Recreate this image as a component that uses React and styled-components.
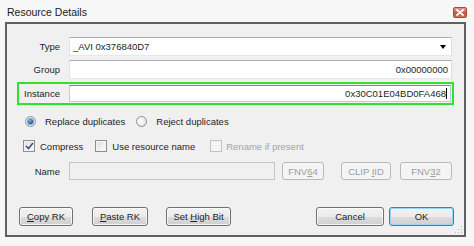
import React from "react";
import styled, { createGlobalStyle } from "styled-components";

const GlobalStyle = createGlobalStyle`
  html, body {
    margin: 0;
    padding: 0;
    background: #f7f7f7;
  }
  #root {
    width: 474px;
    height: 246px;
    overflow: hidden;
  }
  * {
    box-sizing: border-box;
  }
`;

const App = () => {
  return (
    <>
      <GlobalStyle />
      <Window>
        <TitleBar>
          <Title>Resource Details</Title>
          <CloseButton>
            <svg width="8" height="7" viewBox="0 0 8 7">
              <path d="M1 1 L7 6 M7 1 L1 6" stroke="#fff" strokeWidth="1.8" strokeLinecap="round" />
            </svg>
          </CloseButton>
        </TitleBar>

        <Frame>
          <FieldRow $top={13}>
            <Label>Type</Label>
            <Combo>
              <span>_AVI 0x376840D7</span>
              <DropArrow />
            </Combo>
          </FieldRow>

          <FieldRow $top={4}>
            <Label>Group</Label>
            <TextBox $right>0x00000000</TextBox>
          </FieldRow>

          <Highlight>
            <HighlightLabel>Instance</HighlightLabel>
            <TextBox $right $focused $width={382} $height={17}>
              0x30C01E04BD0FA468
              <Caret />
            </TextBox>
          </Highlight>

          <OptionRow $top={9}>
            <Option $ml={18} $gap={9}>
              <Radio $checked />
              Replace duplicates
            </Option>
            <Option $ml={11} $gap={9}>
              <Radio />
              Reject duplicates
            </Option>
          </OptionRow>

          <OptionRow $top={11}>
            <Option $ml={16} $gap={5}>
              <CheckBox>
                <svg width="9" height="8" viewBox="0 0 9 8">
                  <path d="M1 4 L3.5 6.5 L8 1" stroke="#3b4f8a" strokeWidth="1.6" fill="none" />
                </svg>
              </CheckBox>
              Compress
            </Option>
            <Option $ml={12} $gap={5}>
              <CheckBox />
              Use resource name
            </Option>
            <Option $ml={15} $gap={4} $disabled>
              <CheckBox $disabled />
              Rename if present
            </Option>
          </OptionRow>

          <FieldRow $top={9}>
            <Label>Name</Label>
            <TextBox $disabled $width={206} $height={18} />
            <PushButton disabled $ml={7} $width={42} $height={18}>
              FNV<u>6</u>4
            </PushButton>
            <PushButton disabled $ml={17} $width={50} $height={18}>
              CLIP <u>I</u>ID
            </PushButton>
            <PushButton disabled $ml={9} $width={52} $height={18}>
              FNV<u>3</u>2
            </PushButton>
          </FieldRow>

          <ButtonBar>
            <ButtonGroup>
              <PushButton $width={54}>
                <u>C</u>opy RK
              </PushButton>
              <PushButton $ml={19} $width={56}>
                <u>P</u>aste RK
              </PushButton>
              <PushButton $ml={18} $width={65}>
                Set <u>H</u>igh Bit
              </PushButton>
            </ButtonGroup>
            <ButtonGroup>
              <PushButton $width={68}>Cancel</PushButton>
              <PushButton $default $ml={5} $width={65}>
                OK
              </PushButton>
            </ButtonGroup>
          </ButtonBar>

          <Grip>
            <svg width="8" height="8" viewBox="0 0 8 8">
              <rect x="6" y="0" width="1" height="1" fill="#b5b5b5" />
              <rect x="3" y="3" width="1" height="1" fill="#b5b5b5" />
              <rect x="6" y="3" width="1" height="1" fill="#b5b5b5" />
              <rect x="0" y="6" width="1" height="1" fill="#b5b5b5" />
              <rect x="3" y="6" width="1" height="1" fill="#b5b5b5" />
              <rect x="6" y="6" width="1" height="1" fill="#b5b5b5" />
            </svg>
          </Grip>
        </Frame>
      </Window>
    </>
  );
};

export default App;

/* ---------- styled-components ---------- */

const Window = styled.div`
  width: 474px;
  height: 246px;
  font-family: "Liberation Sans", Arial, sans-serif;
  font-size: 9.5px;
  color: #1e1e1e;
`;

const TitleBar = styled.div`
  height: 22px;
  display: flex;
  align-items: center;
  justify-content: space-between;
  padding: 2px 7px 0 7px;
`;

const Title = styled.div`
  font-size: 10.5px;
  color: #1a1a1a;
  text-shadow: 0 0 8px #ffffff;
`;

const CloseButton = styled.div`
  width: 14px;
  height: 11px;
  border-radius: 2px;
  border: 1px solid #a9483d;
  background: linear-gradient(#e29a8e, #d0604f 50%, #c24330 51%, #d1735c);
  display: flex;
  align-items: center;
  justify-content: center;
`;

const Frame = styled.div`
  position: relative;
  margin-left: 5px;
  width: 461px;
  height: 215px;
  border: 2px solid #606060;
  background: #f0f0f0;
  display: flex;
  flex-direction: column;
`;

const FieldRow = styled.div`
  display: flex;
  align-items: center;
  margin-top: ${({ $top }) => $top || 0}px;
`;

const Label = styled.div`
  width: 53px;
  margin-right: 9px;
  text-align: right;
`;

const TextBox = styled.div`
  position: relative;
  width: ${({ $width }) => $width || 383}px;
  height: ${({ $height }) => $height || 19}px;
  padding: 0 3px;
  display: flex;
  align-items: center;
  justify-content: ${({ $right }) => ($right ? "flex-end" : "flex-start")};
  background: ${({ $disabled }) => ($disabled ? "#f0f0f0" : "#ffffff")};
  border: 1px solid;
  border-color: ${({ $disabled, $focused }) =>
    $disabled
      ? "#c6c6c6"
      : $focused
      ? "#5a8fc8 #b5cfe7 #b5cfe7 #b5cfe7"
      : "#abadb3 #dbdfe6 #e3e9ef #e2e3ea"};
`;

const Caret = styled.span`
  display: inline-block;
  width: 1px;
  height: 11px;
  background: #000;
  margin-left: 0;
`;

const Combo = styled.div`
  width: 383px;
  height: 19px;
  padding: 0 4px 0 3px;
  display: flex;
  align-items: center;
  justify-content: space-between;
  background: #ffffff;
  border: 1px solid;
  border-color: #abadb3 #dbdfe6 #e3e9ef #e2e3ea;
`;

const DropArrow = styled.span`
  width: 0;
  height: 0;
  margin-right: 1px;
  border-left: 3.5px solid transparent;
  border-right: 3.5px solid transparent;
  border-top: 4px solid #000;
`;

const Highlight = styled.div`
  margin: 3px 0 0 10px;
  width: 437px;
  height: 23px;
  border: 2px solid #2ee22e;
  display: flex;
  align-items: center;
  padding-left: 5px;
`;

const HighlightLabel = styled.div`
  width: 45px;
`;

const OptionRow = styled.div`
  display: flex;
  align-items: center;
  height: 14px;
  margin-top: ${({ $top }) => $top || 0}px;
`;

const Option = styled.label`
  display: flex;
  align-items: center;
  gap: ${({ $gap }) => $gap}px;
  margin-left: ${({ $ml }) => $ml || 0}px;
  color: ${({ $disabled }) => ($disabled ? "#a3a3a3" : "#1e1e1e")};
  white-space: nowrap;
`;

const Radio = styled.span`
  width: 11px;
  height: 11px;
  border-radius: 50%;
  border: 1px solid #8e8f8f;
  background: radial-gradient(circle at 40% 40%, #ffffff, #dcdcdc);
  display: flex;
  align-items: center;
  justify-content: center;

  &::after {
    content: "";
    display: ${({ $checked }) => ($checked ? "block" : "none")};
    width: 5px;
    height: 5px;
    border-radius: 50%;
    background: radial-gradient(circle at 40% 35%, #7bb8e8, #1a4f8c 70%);
    box-shadow: 0 0 0 1px #6aa4d6;
  }
`;

const CheckBox = styled.span`
  width: 12px;
  height: 12px;
  border: 1px solid ${({ $disabled }) => ($disabled ? "#c2c2c2" : "#8e8f8f")};
  background: ${({ $disabled }) =>
    $disabled ? "#f4f4f4" : "linear-gradient(135deg, #dcdcdc, #ffffff)"};
  box-shadow: inset 0 0 0 1px #f4f4f4;
  display: flex;
  align-items: center;
  justify-content: center;
`;

const PushButton = styled.button`
  width: ${({ $width }) => $width}px;
  height: ${({ $height }) => $height || 19}px;
  margin-left: ${({ $ml }) => $ml || 0}px;
  padding: 0;
  font-family: inherit;
  font-size: 9.5px;
  color: #1e1e1e;
  border-radius: 3px;
  border: 1px solid ${({ $default }) => ($default ? "#3c7fb1" : "#707070")};
  background: linear-gradient(#f2f2f2 0%, #ebebeb 50%, #dddddd 51%, #cfcfcf 100%);
  box-shadow: inset 0 0 0 1px ${({ $default }) => ($default ? "#9ad7f4" : "rgba(255,255,255,0.75)")};

  &:disabled {
    color: #9c9c9c;
    border-color: #b6babd;
    background: #f4f4f4;
    box-shadow: none;
  }

  u {
    text-decoration-thickness: 1px;
    text-underline-offset: 1px;
  }
`;

const ButtonBar = styled.div`
  display: flex;
  justify-content: space-between;
  margin: 27px 0 0 12px;
  padding-right: 10px;
`;

const ButtonGroup = styled.div`
  display: flex;
`;

const Grip = styled.div`
  position: absolute;
  right: 1px;
  bottom: 1px;
  width: 8px;
  height: 8px;
  display: flex;
`;
